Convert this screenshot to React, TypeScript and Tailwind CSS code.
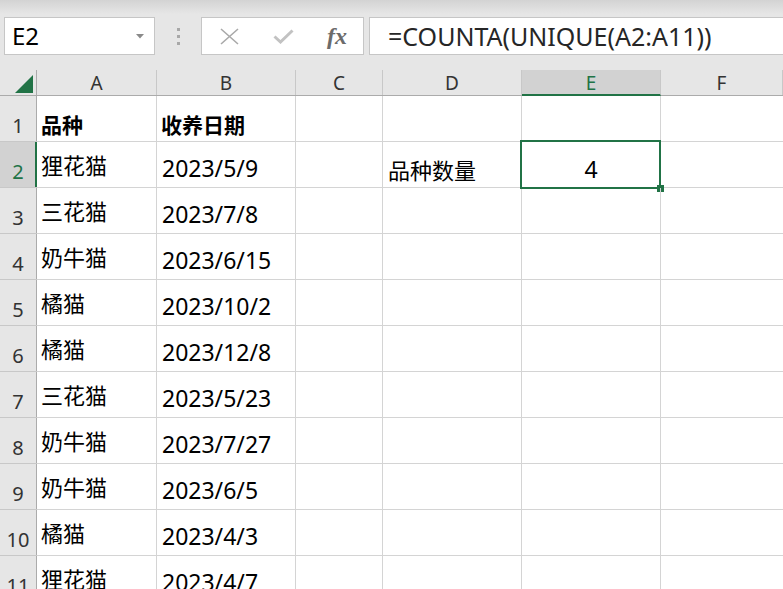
import React from "react";

const colWidths = ["w-[120px]", "w-[139px]", "w-[87px]", "w-[139px]", "w-[139px]", "flex-1"];
const colNames = ["A", "B", "C", "D", "E", "F"];

const data = [
  ["狸花猫", "2023/5/9"],
  ["三花猫", "2023/7/8"],
  ["奶牛猫", "2023/6/15"],
  ["橘猫", "2023/10/2"],
  ["橘猫", "2023/12/8"],
  ["三花猫", "2023/5/23"],
  ["奶牛猫", "2023/7/27"],
  ["奶牛猫", "2023/6/5"],
  ["橘猫", "2023/4/3"],
  ["狸花猫", "2023/4/7"],
];

function Toolbar() {
  return (
    <div className="h-[70px] flex items-start pt-[17px] bg-[linear-gradient(to_bottom,#d3d3d3,#e6e6e6_14px)]">
      <div className="ml-[4px] w-[151px] h-[38px] bg-white border border-[#c6c6c6] flex items-center pl-[7px] pr-[10px]">
        <span className="text-[24px] leading-none text-black flex-1">E2</span>
        <svg width="8" height="5" viewBox="0 0 8 5">
          <path d="M0 0 L8 0 L4 4.5 Z" fill="#8a8a8a" />
        </svg>
      </div>
      <div className="w-[46px] h-[38px] flex flex-col items-center justify-center gap-[4px]">
        <div className="w-[3px] h-[3px] bg-[#a8a8a8]" />
        <div className="w-[3px] h-[3px] bg-[#a8a8a8]" />
        <div className="w-[3px] h-[3px] bg-[#a8a8a8]" />
      </div>
      <div className="w-[163px] h-[38px] bg-white border border-[#c6c6c6] flex items-center">
        <svg className="ml-[18px]" width="19" height="17" viewBox="0 0 19 17">
          <path d="M1 1 L18 16 M18 1 L1 16" stroke="#a9a9a9" strokeWidth="1.6" fill="none" />
        </svg>
        <svg className="ml-[34px]" width="21" height="15" viewBox="0 0 21 15">
          <path d="M1.5 7.5 L7.5 13 L19.5 1.5" stroke="#c2c2c2" strokeWidth="3" fill="none" />
        </svg>
        <span className="ml-[33px] text-[24px] leading-none italic font-bold text-[#6b6b6b] font-['Liberation_Serif',serif]">
          fx
        </span>
      </div>
      <div className="ml-[5px] flex-1 h-[38px] bg-white border border-[#c6c6c6] border-r-0 flex items-center pl-[18px]">
        <span className="text-[25px] leading-none text-[#262626]">=COUNTA(UNIQUE(A2:A11))</span>
      </div>
    </div>
  );
}

function HeaderRow() {
  return (
    <div className="h-[26px] flex bg-[#e6e6e6] border-b border-[#ababab]">
      <div className="w-[37px] border-r border-[#ababab] flex items-end justify-end pr-[3px] pb-[2px]">
        <svg width="18" height="18" viewBox="0 0 18 18">
          <path d="M18 0 L18 18 L0 18 Z" fill="#217346" />
        </svg>
      </div>
      {colNames.map((c, i) => {
        const selected = c === "E";
        return (
          <div
            key={c}
            className={
              colWidths[i] +
              " border-r border-[#c8c8c8] flex items-end justify-center text-[19px] leading-none " +
              (selected
                ? "bg-[#d2d2d2] text-[#217346] pb-[1px] border-b-2 border-b-[#217346] -mb-px"
                : "text-[#333] pb-[2px]")
            }
          >
            {c}
          </div>
        );
      })}
    </div>
  );
}

function RowHeader({ n, selected }: { n: number; selected?: boolean }) {
  return (
    <div
      className={
        "w-[37px] flex items-end justify-center text-[20px] leading-none pb-[5px] border-r " +
        (selected
          ? "bg-[#d2d2d2] text-[#217346] border-r-2 border-r-[#217346] pl-px"
          : "bg-[#e6e6e6] text-[#333] border-r-[#ababab]")
      }
    >
      {n}
    </div>
  );
}

export default function App() {
  return (
    <div className="w-[783px] h-[589px] overflow-hidden bg-white text-black font-['Noto_Sans','Noto_Sans_CJK_SC',sans-serif]">
      <Toolbar />
      <HeaderRow />
      {/* row 1: headings */}
      <div className="h-[46px] flex border-b border-[#d4d4d4]">
        <div className="flex border-b border-[#c8c8c8] -mb-px">
          <RowHeader n={1} />
        </div>
        <div className="w-[120px] border-r border-[#d4d4d4] flex items-end pl-[4px] pb-[5px] text-[21px] leading-none font-bold">
          品种
        </div>
        <div className="w-[139px] border-r border-[#d4d4d4] flex items-end pl-[4px] pb-[5px] text-[21px] leading-none font-bold">
          收养日期
        </div>
        <div className="w-[87px] border-r border-[#d4d4d4]" />
        <div className="w-[139px] border-r border-[#d4d4d4]" />
        <div className="w-[139px] border-r border-[#d4d4d4]" />
        <div className="flex-1" />
      </div>
      {data.map((row, i) => {
        const n = i + 2;
        const sel = n === 2;
        return (
          <div key={n} className="h-[46px] flex border-b border-[#d4d4d4]">
            <div className="flex border-b border-[#c8c8c8] -mb-px">
              <RowHeader n={n} selected={sel} />
            </div>
            <div className="w-[120px] border-r border-[#d4d4d4] flex items-end pl-[4px] pb-[11px] text-[22px] leading-none">
              {row[0]}
            </div>
            <div className="w-[139px] border-r border-[#d4d4d4] flex items-end pl-[5px] pb-[7px] text-[23px] leading-none">
              {row[1]}
            </div>
            <div className="w-[87px] border-r border-[#d4d4d4]" />
            <div className="w-[139px] border-r border-[#d4d4d4] flex items-end pl-[5px] pb-[6px] text-[22px] leading-none">
              {sel ? "品种数量" : ""}
            </div>
            <div className="relative w-[139px] border-r border-[#d4d4d4] flex items-end justify-center pb-[6px] text-[23px] leading-none">
              {sel && (
                <>
                  4
                  <div className="absolute -left-[2px] -top-[2px] -right-px -bottom-[2px] border-2 border-[#217346]" />
                  <div className="absolute -right-[4px] -bottom-[5px] w-[7px] h-[7px] bg-[#217346]" />
                </>
              )}
            </div>
            <div className="flex-1" />
          </div>
        );
      })}
    </div>
  );
}
